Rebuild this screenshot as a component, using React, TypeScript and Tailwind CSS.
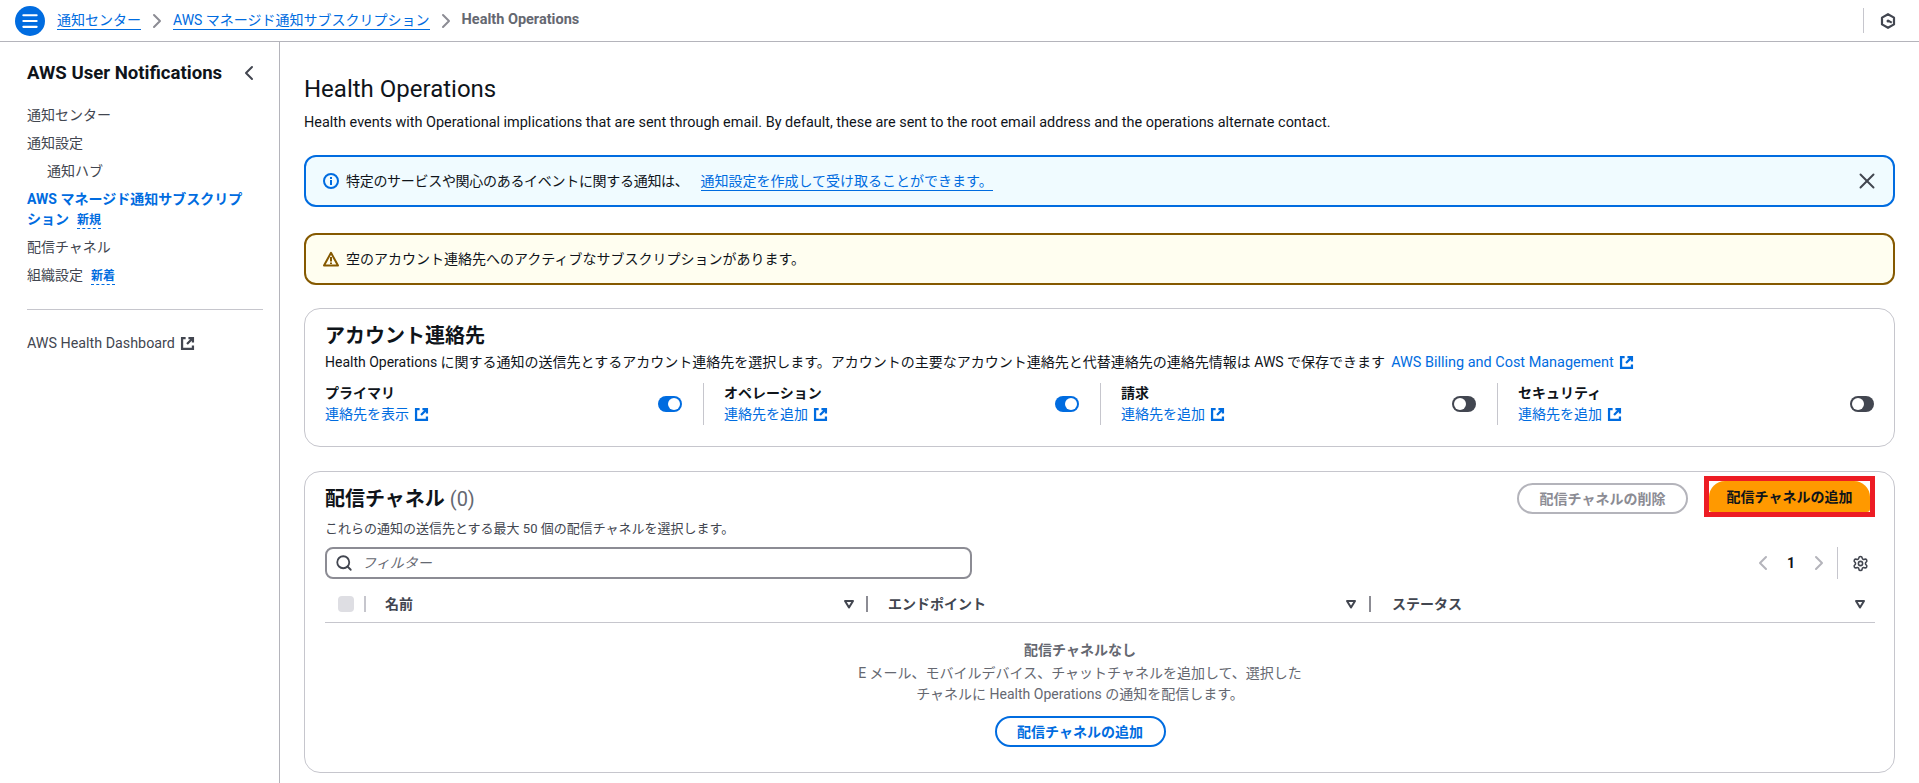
import { Menu, ChevronRight, ChevronLeft, X, Search, Settings } from 'lucide-react';

const font = 'font-["Roboto","Noto_Sans_CJK_JP",sans-serif]';

function ExternalIcon({ color = '#006ce0' }: { color?: string }) {
  return (
    <svg viewBox="0 0 16 16" className="ml-[5px] inline-block h-[15px] w-[15px] align-[-3px]" fill="none" stroke={color} strokeWidth="2.4">
      <path d="M6 2.2H2.2v11.6h11.6V10" />
      <path d="M9 2.2h4.8V7M13.8 2.2 7.5 8.5" />
    </svg>
  );
}

function HexIcon() {
  return (
    <svg viewBox="0 0 16 16" className="h-4 w-4" fill="none" stroke="#424650" strokeWidth="2.2">
      <path d="M8 1.2 14 4.6v6.8L8 14.8 2 11.4V4.6z" strokeLinejoin="round" />
      <circle cx="8" cy="8" r="1.5" fill="#424650" stroke="none" />
      <path d="M8 7.6l3.8 2" />
    </svg>
  );
}

function SortIcon() {
  return (
    <svg viewBox="0 0 12 12" className="h-3 w-3" fill="none" stroke="#424650" strokeWidth="2">
      <path d="M2 3h8L6 9.5z" strokeLinejoin="round" />
    </svg>
  );
}

function Toggle({ on }: { on: boolean }) {
  return (
    <span className={`flex h-4 w-6 items-center rounded-full px-0.5 ${on ? 'justify-end bg-[#006ce0]' : 'justify-start bg-[#424650]'}`}>
      <span className="h-3 w-3 rounded-full bg-white" />
    </span>
  );
}

function BadgeNew({ label }: { label: string }) {
  return <span className="ml-2 inline-block border-b border-dashed border-[#006ce0] text-xs leading-[15px] font-bold text-[#006ce0]">{label}</span>;
}

function Contact({ title, link, on, className }: { title: string; link: string; on: boolean; className: string }) {
  return (
    <div className={`flex h-[42px] items-center justify-between ${className}`}>
      <div>
        <div className="text-sm leading-[20px] font-bold text-[#0f141a]">{title}</div>
        <a className="text-sm leading-[22px] text-[#006ce0]">
          {link}
          <ExternalIcon />
        </a>
      </div>
      <Toggle on={on} />
    </div>
  );
}

function HeaderCell({ label, className }: { label: string; className: string }) {
  return (
    <div className={`flex items-center justify-between ${className}`}>
      <span className="text-sm font-bold text-[#424650]">{label}</span>
      <SortIcon />
    </div>
  );
}

export default function App() {
  return (
    <div className={`flex h-[783px] w-[1919px] flex-col overflow-hidden bg-white text-sm text-[#0f141a] ${font}`}>
      <header className="flex h-[42px] shrink-0 items-center border-b border-[#b4b4bb] pl-[15px]">
        <span className="flex h-[30px] w-[30px] items-center justify-center rounded-full bg-[#006ce0]">
          <Menu size={20} color="white" strokeWidth={2.5} />
        </span>
        <a className="ml-3 border-b border-[#006ce0] text-sm leading-[18px] text-[#006ce0]">通知センター</a>
        <ChevronRight size={24} color="#8c8c94" className="mx-1" />
        <a className="border-b border-[#006ce0] text-sm leading-[18px] text-[#006ce0]">AWS マネージド通知サブスクリプション</a>
        <ChevronRight size={24} color="#8c8c94" className="mx-1" />
        <span className="text-[14.5px] font-bold text-[#656871]">Health Operations</span>
        <div className="ml-auto flex h-[25px] items-center border-l border-[#c6c6cd] pr-[23px] pl-4">
          <HexIcon />
        </div>
      </header>

      <div className="flex min-h-0 flex-1">
        <aside className="w-[280px] shrink-0 border-r border-[#b4b4bb] pt-[19px] pl-[27px]">
          <div className="flex w-[234px] items-center justify-between">
            <h2 className="text-[18.6px] leading-6 font-bold">AWS User Notifications</h2>
            <ChevronLeft size={24} color="#424650" strokeWidth={2} />
          </div>
          <nav className="mt-[16px] text-sm text-[#424650]">
            <div className="leading-[28px]">通知センター</div>
            <div className="leading-[28px]">通知設定</div>
            <div className="pl-5 leading-[28px]">通知ハブ</div>
            <div className="pt-[4px] leading-[20px] font-bold text-[#006ce0]">
              AWS マネージド通知サブスクリプ
              <br />
              ション
              <BadgeNew label="新規" />
            </div>
            <div className="pt-[4px] leading-[28px]">配信チャネル</div>
            <div className="leading-[28px]">
              組織設定
              <BadgeNew label="新着" />
            </div>
          </nav>
          <div className="mt-5 w-[236px] border-t border-[#c6c6cd]" />
          <div className="mt-[23px] text-[14.3px] leading-5 text-[#424650]">
            AWS Health Dashboard
            <ExternalIcon color="#424650" />
          </div>
        </aside>

        <main className="min-w-0 flex-1 pt-[32px] pr-6 pl-6">
          <h1 className="text-2xl leading-[30px] font-normal">Health Operations</h1>
          <p className="mt-[9px] text-[14.45px] leading-5">
            Health events with Operational implications that are sent through email. By default, these are sent to the root email address and the operations alternate contact.
          </p>

          <div className="mt-[22px] flex h-[52px] items-center rounded-xl border-2 border-[#006ce0] bg-[#f0fbff] pr-[13px] pl-[17px]">
            <svg viewBox="0 0 16 16" className="h-4 w-4 shrink-0" fill="none" stroke="#006ce0" strokeWidth="2">
              <circle cx="8" cy="8" r="7" />
              <path d="M8 7v5M8 4v2" />
            </svg>
            <span className="ml-[7px] tracking-[-0.3px]">特定のサービスや関心のあるイベントに関する通知は、</span>
            <a className="ml-3 border-b border-[#006ce0] leading-[18px] text-[#006ce0]">通知設定を作成して受け取ることができます。</a>
            <X size={26} color="#424650" strokeWidth={1.8} className="ml-auto" />
          </div>

          <div className="mt-[26px] flex h-[52px] items-center rounded-xl border-2 border-[#855900] bg-[#fffef0] px-[17px]">
            <svg viewBox="0 0 16 16" className="h-4 w-4 shrink-0" fill="none" stroke="#855900" strokeWidth="2" strokeLinejoin="round">
              <path d="M8 1.8 15 14.5H1z" />
              <path d="M8 6v4.5M8 11.5v1.5" />
            </svg>
            <span className="ml-[7px]">空のアカウント連絡先へのアクティブなサブスクリプションがあります。</span>
          </div>

          <section className="mt-[23px] h-[139px] rounded-2xl border border-[#c6c6cd] pt-[14px] pr-[20px] pl-5">
            <h2 className="text-xl leading-[26px] font-bold">アカウント連絡先</h2>
            <p className="text-sm leading-[26px]">
              Health Operations に関する通知の送信先とするアカウント連絡先を選択します。アカウントの主要なアカウント連絡先と代替連絡先の連絡先情報は AWS で保存できます
              <a className="ml-1.5 text-[14.45px] text-[#006ce0]">
                AWS Billing and Cost Management
                <ExternalIcon />
              </a>
            </p>
            <div className="mt-[7px] flex">
              <Contact title="プライマリ" link="連絡先を表示" on className="w-[378px] pr-[21px]" />
              <Contact title="オペレーション" link="連絡先を追加" on className="w-[397px] border-l border-[#c6c6cd] pr-[21px] pl-5" />
              <Contact title="請求" link="連絡先を追加" on={false} className="w-[397px] border-l border-[#c6c6cd] pr-[21px] pl-5" />
              <Contact title="セキュリティ" link="連絡先を追加" on={false} className="flex-1 border-l border-[#c6c6cd] pl-5" />
            </div>
          </section>

          <section className="mt-[24px] h-[302px] rounded-2xl border border-[#c6c6cd] pt-[4px] pr-[19px] pl-5">
            <div className="flex h-[42px] items-start">
              <h2 className="mt-[9px] text-xl font-bold">
                配信チャネル <span className="font-normal text-[#656871]">(0)</span>
              </h2>
              <button className="mt-[7px] mr-[16px] ml-auto h-[31px] w-[171px] rounded-full border-2 border-[#b4b4bb] text-sm font-bold text-[#8c8c94]">
                配信チャネルの削除
              </button>
              <div className="border-[5px] border-[#ed1c24]">
                <button className="block h-[31px] w-[161px] rounded-t-[16px] rounded-b-[3px] bg-[#ff9900] text-sm font-bold text-[#0f141a]">
                  配信チャネルの追加
                </button>
              </div>
            </div>
            <p className="text-[13px] leading-[22px] text-[#424650]">これらの通知の送信先とする最大 50 個の配信チャネルを選択します。</p>
            <div className="mt-[7px] flex h-8 items-center">
              <div className="flex h-8 w-[647px] items-center rounded-lg border-2 border-[#8c8c94] pl-2">
                <Search size={18} color="#424650" strokeWidth={2.4} />
                <span className="ml-[9px] text-sm text-[#656871] italic">フィルター</span>
              </div>
              <ChevronLeft size={24} color="#b4b4bb" className="ml-auto" />
              <span className="mx-3 w-2 text-center text-sm font-bold text-[#0f141a]">1</span>
              <ChevronRight size={24} color="#b4b4bb" />
              <div className="ml-[6px] flex h-8 items-center border-l border-[#c6c6cd] pr-[6px] pl-[14px]">
                <Settings size={17} color="#424650" strokeWidth={2.2} />
              </div>
            </div>
            <div className="mt-[8px] flex h-9 items-center border-b border-[#c6c6cd] pb-[2px]">
              <span className="ml-[13px] h-4 w-4 rounded bg-[#dedee3]" />
              <span className="ml-[10px] h-4 w-0.5 bg-[#c6c6cd]" />
              <HeaderCell label="名前" className="ml-[19px] w-[470px] pr-0" />
              <span className="ml-[11px] h-4 w-0.5 bg-[#8c8c94]" />
              <HeaderCell label="エンドポイント" className="ml-5 w-[469px]" />
              <span className="ml-[12px] h-4 w-0.5 bg-[#8c8c94]" />
              <HeaderCell label="ステータス" className="ml-[21px] flex-1 pr-[9px]" />
            </div>
            <div className="flex flex-col items-center pt-[17px] pr-[40px] text-center">
              <div className="text-sm leading-5 font-bold text-[#656871]">配信チャネルなし</div>
              <div className="mt-[3px] text-sm leading-[21px] text-[#656871]">
                E メール、モバイルデバイス、チャットチャネルを追加して、選択した
                <br />
                チャネルに Health Operations の通知を配信します。
              </div>
              <button className="mt-[11px] h-[31px] w-[171px] rounded-full border-2 border-[#006ce0] text-sm font-bold text-[#006ce0]">
                配信チャネルの追加
              </button>
            </div>
          </section>
        </main>
      </div>
    </div>
  );
}
